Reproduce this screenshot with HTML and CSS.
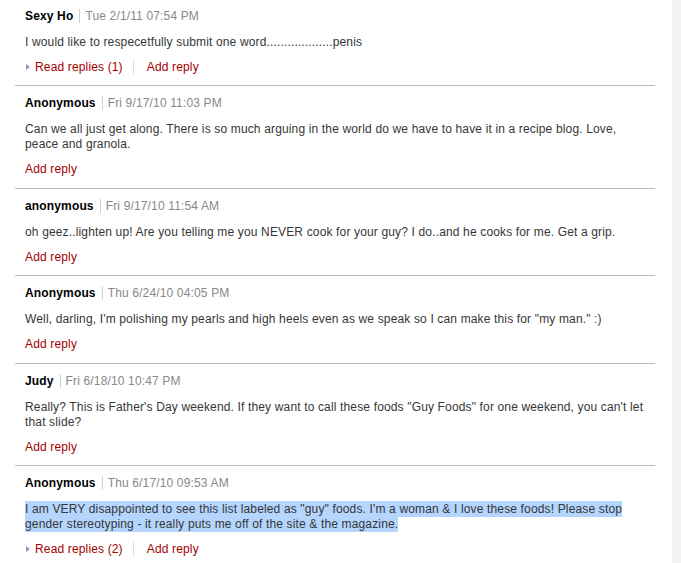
FILE: index.html
```html
<!DOCTYPE html>
<html>
<head>
<meta charset="utf-8">
<link rel="stylesheet" href="styles.css">
</head>
<body>
<div class="page">
  <div class="comments">
    <div class="comment">
      <div class="meta"><span class="author">Sexy Ho</span><span class="date">Tue 2/1/11 07:54 PM</span></div>
      <p class="text">I would like to respecetfully submit one word...................penis</p>
      <div class="actions"><a class="replies"><span class="tri"></span>Read replies (1)</a><a class="add">Add reply</a></div>
    </div>
    <div class="comment">
      <div class="meta"><span class="author">Anonymous</span><span class="date">Fri 9/17/10 11:03 PM</span></div>
      <p class="text">Can we all just get along. There is so much arguing in the world do we have to have it in a recipe blog. Love, peace and granola.</p>
      <div class="actions"><a class="add solo">Add reply</a></div>
    </div>
    <div class="comment">
      <div class="meta"><span class="author">anonymous</span><span class="date">Fri 9/17/10 11:54 AM</span></div>
      <p class="text">oh geez..lighten up! Are you telling me you NEVER cook for your guy? I do..and he cooks for me. Get a grip.</p>
      <div class="actions"><a class="add solo">Add reply</a></div>
    </div>
    <div class="comment">
      <div class="meta"><span class="author">Anonymous</span><span class="date">Thu 6/24/10 04:05 PM</span></div>
      <p class="text">Well, darling, I'm polishing my pearls and high heels even as we speak so I can make this for "my man." :)</p>
      <div class="actions"><a class="add solo">Add reply</a></div>
    </div>
    <div class="comment">
      <div class="meta"><span class="author">Judy</span><span class="date">Fri 6/18/10 10:47 PM</span></div>
      <p class="text">Really? This is Father's Day weekend. If they want to call these foods "Guy Foods" for one weekend, you can't let that slide?</p>
      <div class="actions"><a class="add solo">Add reply</a></div>
    </div>
    <div class="comment">
      <div class="meta"><span class="author">Anonymous</span><span class="date">Thu 6/17/10 09:53 AM</span></div>
      <p class="text"><span class="sel">I am VERY disappointed to see this list labeled as "guy" foods. I'm a woman &amp; I love these foods! Please stop gender stereotyping - it really puts me off of the site &amp; the magazine.</span></p>
      <div class="actions"><a class="replies"><span class="tri"></span>Read replies (2)</a><a class="add">Add reply</a></div>
    </div>
  </div>
  <div class="scroll"></div>
</div>
</body>
</html>
```

FILE: styles.css
```css
html, body {
  margin: 0;
  padding: 0;
  background: #fff;
}
body {
  font-family: "Liberation Sans", Arial, Helvetica, sans-serif;
  font-size: 12px;
  letter-spacing: 0.15px;
  color: #333;
}
.page {
  display: flex;
  height: 563px;
  overflow: hidden;
}
.comments {
  width: 640px;
  margin-left: 15px;
}
.scroll {
  margin-left: auto;
  width: 9px;
  background: #f4f4f4;
}
.comment {
  padding: 9px 10px 10.4px 10px;
  border-bottom: 1px solid #bcbcbc;
}
.comment:first-child {
  padding-top: 8px;
}
.comment:last-child {
  border-bottom: none;
}
.meta {
  display: flex;
  align-items: center;
  line-height: 16px;
}
.author {
  font-weight: bold;
  color: #000;
  padding-right: 6px;
  border-right: 1px solid #d0d0d0;
  line-height: 14px;
}
.date {
  color: #888;
  padding-left: 5px;
}
.text {
  margin: 11px 0 9px;
  line-height: 15px;
  color: #363636;
}
.sel {
  background: #b4d5fe;
  padding: 1px 0;
}
.actions {
  display: flex;
  align-items: center;
  line-height: 16px;
}
.actions a {
  color: #a30000;
  text-decoration: none;
}
.replies {
  display: flex;
  align-items: center;
  padding-left: 1px;
  padding-right: 10px;
  border-right: 1px solid #dcdcdc;
  line-height: 14px;
}
.tri {
  width: 0;
  height: 0;
  border-left: 4px solid #8e9cbf;
  border-top: 3.5px solid transparent;
  border-bottom: 3.5px solid transparent;
  margin-right: 5px;
}
.add {
  padding-left: 13px;
}
.add.solo {
  padding-left: 0;
}
```
